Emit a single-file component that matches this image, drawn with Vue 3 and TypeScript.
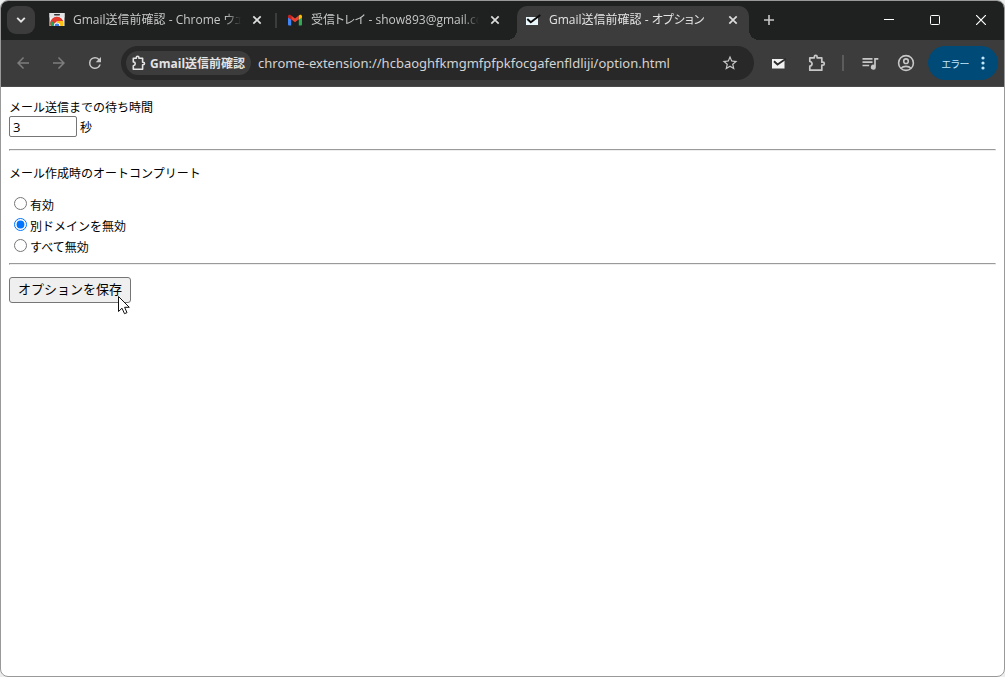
<script setup lang="ts">
import { ref } from 'vue'

interface Tab {
  id: number
  title: string
  icon: 'store' | 'gmail' | 'check'
  active: boolean
}

const tabs: Tab[] = [
  { id: 1, title: 'Gmail送信前確認 - Chrome ウェブ', icon: 'store', active: false },
  { id: 2, title: '受信トレイ - show893@gmail.com', icon: 'gmail', active: false },
  { id: 3, title: 'Gmail送信前確認 - オプション', icon: 'check', active: true },
]

const choices = [
  { value: 'on', label: '有効' },
  { value: 'other', label: '別ドメインを無効' },
  { value: 'off', label: 'すべて無効' },
]

const url = ref('chrome-extension://hcbaoghfkmgmfpfpkfocgafenfldliji/option.html')
const seconds = ref('3')
const mode = ref('other')
</script>

<template>
  <div class="window">
    <header class="strip">
      <button class="search" type="button" aria-label="タブを検索">
        <svg width="10" height="8" viewBox="0 0 10 8"><path d="M1.2 1.8 5 5.6l3.8-3.8" fill="none" stroke="#e3e3e3" stroke-width="1.9" /></svg>
      </button>
      <div v-for="tab in tabs" :key="tab.id" class="tab" :class="{ active: tab.active, divided: tab.id === 1 }">
        <svg v-if="tab.icon === 'store'" class="favicon" width="16" height="16" viewBox="0 0 16 16">
          <path d="M.5 1h15v13h-15z" fill="#f1f3f4" />
          <path d="M.5 1h15v4.500h-15z" fill="#e1e3e4" />
          <rect x="5" y="2" width="6" height="1.500" rx=".7" fill="#333" />
          <path d="M1.600 14A6.500 6.500 0 0 1 14 9H8z" fill="#e33b2e" />
          <path d="M1.700 10.500A6.500 6.500 0 0 0 2 14h5L3 8.200z" fill="#23a455" />
          <path d="M8 9h6.200a6.500 6.500 0 0 1 .2 5H7z" fill="#fbc116" />
          <path d="M2.700 8.200A6.500 6.500 0 0 1 14 9H8l-3 3z" fill="#e33b2e" />
          <path d="M4.800 14a3.200 3.200 0 1 1 6.400 0z" fill="#fff" />
          <path d="M5.600 14a2.400 2.400 0 1 1 4.800 0z" fill="#3b7ded" />
        </svg>
        <svg v-else-if="tab.icon === 'gmail'" class="favicon" width="16" height="16" viewBox="0 0 16 16">
          <path d="M1 4.500 4.200 7v6.500H2a1 1 0 0 1-1-1z" fill="#4285f4" />
          <path d="M15 4.500 11.800 7v6.500H14a1 1 0 0 0 1-1z" fill="#34a853" />
          <path d="M4.200 3.600 8 6.500l3.800-2.900V7.200L8 10.200 4.200 7.200z" fill="#ea4335" />
          <path d="M1 4.200v1.300l3.200 2.300V3.600l-.8-.6C2.300 2.300 1 3 1 4.200z" fill="#c5221f" />
          <path d="M15 4.200v1.300l-3.200 2.300V3.600l.8-.6C13.700 2.300 15 3 15 4.200z" fill="#fbbc04" />
        </svg>
        <svg v-else class="favicon" width="16" height="16" viewBox="0 0 16 16">
          <path d="M1 5h12v8H1z" fill="#e9f6fc" />
          <path d="M2.300 7 5.800 10.200 15.300 3" fill="none" stroke="#0b0b0b" stroke-width="1.900" />
        </svg>
        <span class="title">{{ tab.title }}</span>
        <button class="close" type="button" aria-label="閉じる">
          <svg width="10" height="10" viewBox="0 0 10 10"><path d="m1.300 1.300 7.400 7.400M8.700 1.300 1.300 8.700" stroke="#dcdcdc" stroke-width="1.700" /></svg>
        </button>
      </div>
      <button class="new" type="button" aria-label="新しいタブ">
        <svg width="12" height="12" viewBox="0 0 12 12"><path d="M6 1v10M1 6h10" stroke="#c7c7c7" stroke-width="1.600" /></svg>
      </button>
      <div class="controls">
        <button type="button" aria-label="最小化"><svg width="10" height="10"><path d="M0 4.500h10" stroke="#fff" /></svg></button>
        <button type="button" aria-label="最大化"><svg width="10" height="10"><rect x=".5" y=".5" width="9" height="9" rx="1" fill="none" stroke="#fff" /></svg></button>
        <button type="button" aria-label="ウィンドウを閉じる"><svg width="10" height="10"><path d="m0 0 10 10M10 0 0 10" stroke="#fff" stroke-width="1.200" /></svg></button>
      </div>
    </header>

    <nav class="toolbar">
      <button class="tool dim" type="button" aria-label="戻る">
        <svg width="18" height="18" viewBox="0 0 24 24"><path d="M20 11H7.830l5.590-5.590L12 4l-8 8 8 8 1.410-1.410L7.830 13H20z" /></svg>
      </button>
      <button class="tool dim" type="button" aria-label="進む">
        <svg width="18" height="18" viewBox="0 0 24 24"><path d="m12 4-1.410 1.410L16.170 11H4v2h12.170l-5.580 5.590L12 20l8-8z" /></svg>
      </button>
      <button class="tool" type="button" aria-label="再読み込み">
        <svg width="18" height="18" viewBox="0 0 24 24"><path d="M17.650 6.350A7.960 7.960 0 0 0 12 4a8 8 0 1 0 7.730 10h-2.080A6 6 0 1 1 12 6c1.660 0 3.140.69 4.220 1.780L13 11h7V4z" /></svg>
      </button>
      <div class="omnibox">
        <button class="chip" type="button">
          <svg width="14" height="16" viewBox="0 0 14 16"><path d="M1.300 3.300h3V2.600a1.200 1.200 0 0 1 2.600 0v.7h3.700v3.900h.6a1.300 1.300 0 0 1 0 2.600h-.6v4.400H1.300v-3.500c2.600-.3 2.600-3.500 0-3.800z" fill="none" stroke="#e3e3e3" stroke-width="1.600" stroke-linejoin="round" /></svg>
          <span>Gmail送信前確認</span>
        </button>
        <input v-model="url" class="url" type="text" aria-label="アドレス" />
        <button class="star" type="button" aria-label="ブックマーク">
          <svg width="18" height="18" viewBox="0 0 24 24"><path d="m22 9.240-7.190-.62L12 2 9.190 8.630 2 9.240l5.460 4.730L5.820 21 12 17.270 18.180 21l-1.630-7.030zM12 15.400l-3.760 2.270 1-4.280-3.320-2.880 4.380-.38L12 6.100l1.710 4.040 4.380.38-3.320 2.880 1 4.280z" /></svg>
        </button>
      </div>
      <button class="tool ext" type="button" aria-label="Gmail送信前確認">
        <svg width="16" height="16" viewBox="0 0 16 16"><path d="M2 4h12.500v9.500H2z" fill="#f1f1f1" /><path d="M4 6.200 7.500 9.500 16 3.700" fill="none" stroke="#2c2c2c" stroke-width="1.900" /></svg>
      </button>
      <button class="tool" type="button" aria-label="拡張機能">
        <svg width="18" height="18" viewBox="0 0 18 18"><path d="M1.800 3.800h4.500V2.700a1.400 1.400 0 0 1 2.800 0v1.100h4.700v4.400h1a1.500 1.500 0 0 1 0 3h-1v5H1.800v-4c3-.3 3-4.400 0-4.700z" fill="none" stroke="#c7c7c7" stroke-width="1.700" stroke-linejoin="round" /></svg>
      </button>
      <span class="rule"></span>
      <button class="tool" type="button" aria-label="メディア">
        <svg width="20" height="20" viewBox="0 0 24 24"><path d="M15 6H3v2h12zm0 4H3v2h12zM3 16h8v-2H3zM17 6v8.180a3 3 0 1 0 2 2.820V8h3V6z" /></svg>
      </button>
      <button class="tool" type="button" aria-label="プロフィール">
        <svg width="18" height="18" viewBox="0 0 18 18" fill="none" stroke="#c7c7c7" stroke-width="1.600"><circle cx="9" cy="9" r="7.400" /><circle cx="9" cy="7.200" r="2.300" /><path d="M4 14.200c2.300-2.500 7.700-2.500 10 0" /></svg>
      </button>
      <button class="error" type="button">
        <span>エラー</span>
        <svg width="4" height="14" viewBox="0 0 4 14"><circle cx="2" cy="2" r="1.600" /><circle cx="2" cy="7" r="1.600" /><circle cx="2" cy="12" r="1.600" /></svg>
      </button>
    </nav>

    <main class="page">
      <label class="line" for="wait">メール送信までの待ち時間</label>
      <div class="wait">
        <input id="wait" v-model="seconds" type="text" />
        <span>秒</span>
      </div>
      <hr />
      <p id="auto" class="line heading">メール作成時のオートコンプリート</p>
      <div class="choices" role="radiogroup" aria-labelledby="auto">
        <label v-for="c in choices" :key="c.value" class="choice">
          <input v-model="mode" type="radio" name="auto" :value="c.value" />
          <span>{{ c.label }}</span>
        </label>
      </div>
      <hr />
      <div class="save">
        <button type="button">オプションを保存</button>
        <svg class="pointer" width="14" height="21" viewBox="0 0 14 21"><path d="M1.500 1.500v15l3.500-3.300 2.500 5.500 2.500-1.100-2.400-5.300h4.700z" fill="#fff" stroke="#111" stroke-linejoin="round" /></svg>
      </div>
    </main>
  </div>
</template>

<style>
body {
  margin: 0;
  background: #eceeed;
}
</style>

<style scoped>
.window {
  box-sizing: border-box;
  display: flex;
  flex-direction: column;
  min-height: 100vh;
  overflow: hidden;
  border: 1px solid #999;
  border-radius: 8px;
  background: #fff;
  font-family: "Open Sans", "Noto Sans CJK JP", sans-serif;
  font-size: 12px;
}
button {
  font: inherit;
}
svg {
  display: block;
  flex: none;
}
.strip button,
.toolbar button {
  display: flex;
  align-items: center;
  justify-content: center;
  padding: 0;
  border: 0;
  background: none;
  color: inherit;
}
.strip {
  display: flex;
  height: 39px;
  padding-left: 6px;
  background: #1f2120;
  color: #c7c7c7;
  font-feature-settings: "palt";
}
.strip .search {
  flex: none;
  width: 28px;
  height: 28px;
  margin: 5px 6px 0 0;
  border-radius: 9px;
  background: #3c3c3c;
}
.tab {
  position: relative;
  box-sizing: border-box;
  display: flex;
  align-items: center;
  flex: 0 1 232px;
  min-width: 0;
  height: 34px;
  margin: 5px 6px 0 0;
  padding: 0 8px 6px;
}
.tab.active {
  margin-right: 0;
  border-radius: 10px 10px 0 0;
  background: #3c3c3c;
  color: #e3e3e3;
}
.tab.active::before,
.tab.active::after {
  content: "";
  position: absolute;
  bottom: 0;
  width: 10px;
  height: 10px;
}
.tab.active::before {
  right: 100%;
  background: radial-gradient(circle at 0 0, transparent 10px, #3c3c3c 10px);
}
.tab.active::after {
  left: 100%;
  background: radial-gradient(circle at 100% 0, transparent 10px, #3c3c3c 10px);
}
.tab.divided::after {
  content: "";
  position: absolute;
  top: 7px;
  left: calc(100% + 2px);
  width: 2px;
  height: 15px;
  background: #3c3c3c;
}
.title {
  flex: 1;
  min-width: 0;
  margin: 0 8px;
  overflow: hidden;
  white-space: nowrap;
  line-height: 20px;
  mask-image: linear-gradient(to right, #000 calc(100% - 16px), transparent);
}
.tab .close {
  width: 16px;
  height: 16px;
}
.strip .new {
  flex: none;
  width: 28px;
  height: 28px;
  margin: 5px 0 0 6px;
}
.controls {
  display: flex;
  margin-left: auto;
}
.controls button {
  width: 46px;
  height: 38px;
}
.toolbar {
  display: flex;
  align-items: center;
  height: 46px;
  padding: 0 6px 0 4px;
  border-bottom: 1px solid #4a4a4a;
  background: #3c3c3c;
  color: #e3e3e3;
}
.tool {
  flex: none;
  width: 36px;
  height: 34px;
  fill: #c7c7c7;
}
.dim {
  fill: #7d7d7d;
}
.ext {
  margin: 0 3px 0 6px;
}
.rule {
  flex: none;
  width: 2px;
  height: 16px;
  margin: 0 8px 0 7px;
  background: #5c5c5c;
}
.omnibox {
  display: flex;
  align-items: center;
  flex: 1;
  min-width: 0;
  box-sizing: border-box;
  height: 34px;
  margin-left: 8px;
  padding: 0 15px 0 5px;
  border-radius: 17px;
  background: #282828;
}
.omnibox .chip {
  flex: none;
  gap: 4px;
  height: 24px;
  padding: 0 6px;
  border-radius: 12px;
  background: #3c3c3c;
  font-weight: 700;
}
.url {
  flex: 1;
  min-width: 0;
  height: 24px;
  margin-left: 7px;
  padding: 0;
  border: 0;
  outline: 0;
  background: none;
  color: #d3d3d3;
  font: 13px "Noto Sans", sans-serif;
}
.star {
  fill: #c7c7c7;
}
.toolbar .error {
  flex: none;
  gap: 11px;
  width: 70px;
  height: 34px;
  margin-left: 4px;
  border-radius: 17px;
  background: #004a77;
  color: #c2e7ff;
  fill: #c2e7ff;
  font-size: 10px;
  font-feature-settings: "palt";
}
.page {
  padding: 10px 8px 8px;
  color: #000;
  font-family: "Noto Sans CJK JP", sans-serif;
}
.line {
  display: block;
  margin: 0;
  line-height: 19px;
}
.wait {
  display: flex;
  align-items: center;
  gap: 3px;
  line-height: 21px;
}
.wait input {
  box-sizing: border-box;
  width: 68px;
  height: 21px;
  padding: 0 3px;
  border: 1px solid #767676;
  border-radius: 2px;
  outline: 0;
  background: #fff;
  color: #000;
  font: 13px "Open Sans", sans-serif;
}
hr {
  height: 0;
  margin: 12px 0;
  border: 1px solid;
  border-color: #9a9a9a #eee #eee #9a9a9a;
}
.heading {
  margin-bottom: 12px;
}
.choice {
  display: flex;
  align-items: center;
  width: max-content;
  height: 21px;
}
.choice input {
  width: 13px;
  height: 13px;
  margin: 0 3px 2px 5px;
}
.choices {
  margin-bottom: -6px;
}
.save {
  position: relative;
  width: max-content;
}
.save button {
  height: 26px;
  padding: 0 8px 3px;
  border: 1px solid #767676;
  border-radius: 3px;
  background: #efefef;
  color: #000;
  font-size: 13px;
}
.pointer {
  position: absolute;
  top: 18px;
  right: 0;
}
</style>
